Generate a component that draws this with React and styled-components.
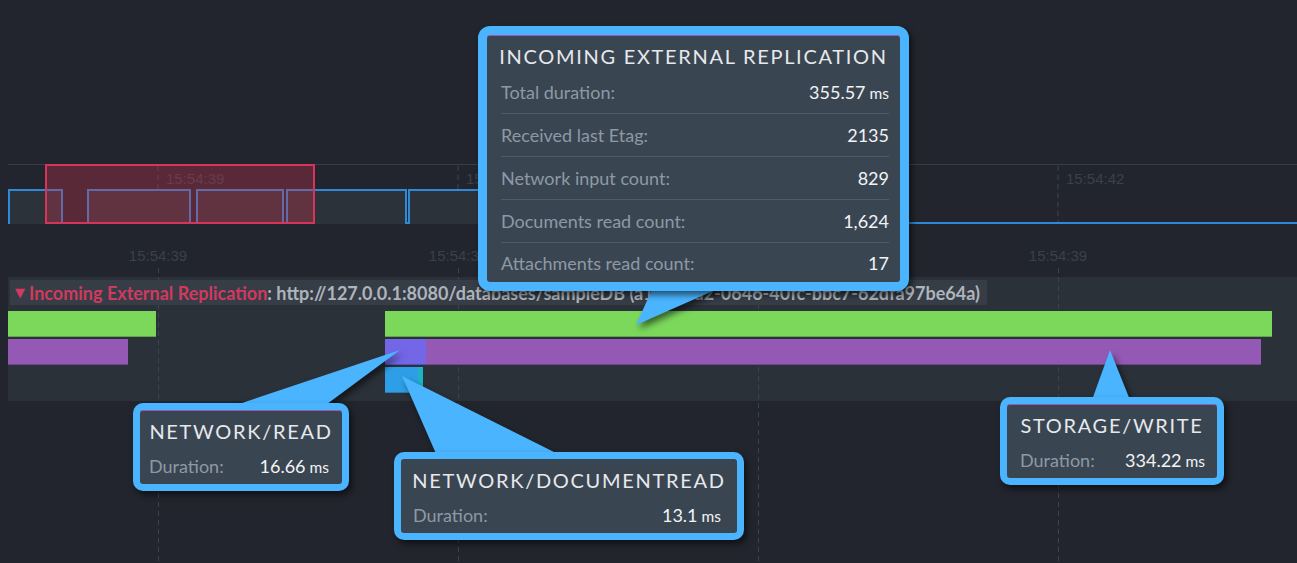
import React from "react";
import styled, { createGlobalStyle } from "styled-components";

const GlobalStyle = createGlobalStyle`
  html, body { margin: 0; padding: 0; background: #22252d; }
  body { font-family: Lato, "Open Sans", "DejaVu Sans", sans-serif; overflow: hidden; }
`;

const Page = styled.div`
  position: relative;
  width: 1297px;
  height: 563px;
  background: #22252d;
  padding-top: 164px;
  box-sizing: border-box;
  display: flex;
  flex-direction: column;
  overflow: hidden;
`;

/* ---------- overview strip ---------- */
const Overview = styled.div`
  position: relative;
  margin-left: 8px;
  height: 60px;
  border-top: 1px solid #383e47;
  box-sizing: border-box;
  flex: none;
`;

const OverviewChart = styled.svg`
  display: block;
  width: 1289px;
  height: 59px;
`;

const Brush = styled.div`
  position: absolute;
  top: -1px;
  left: ${(p) => p.$x}px;
  width: ${(p) => p.$w}px;
  height: 60px;
  box-sizing: border-box;
  border: 2px solid #d6345b;
  background: rgba(200, 50, 80, 0.34);
`;

/* ---------- body: axis + tracks + grid ---------- */
const Body = styled.div`
  position: relative;
  flex: 1;
  display: flex;
  flex-direction: column;
`;

const GridLayer = styled.div`
  position: absolute;
  top: 44px;
  bottom: 0;
  left: 8px;
  right: 0;
  display: flex;
  z-index: 1;
  pointer-events: none;
`;

const GridCol = styled.div`
  flex: none;
  width: 300px;
  background-image: repeating-linear-gradient(
    to bottom,
    #3c434d 0 5px,
    transparent 5px 9px
  );
  background-size: 1px 100%;
  background-position: center top;
  background-repeat: no-repeat;
`;

const Axis = styled.div`
  height: 53px;
  display: flex;
  padding-left: 8px;
  align-items: center;
  padding-top: 11px;
  box-sizing: border-box;
  flex: none;
`;

const TickLabel = styled.div`
  width: 300px;
  flex: none;
  text-align: center;
  font-family: "Liberation Sans", Arial, sans-serif;
  font-size: 15px;
  color: #3a414b;
  line-height: 18px;
`;

const Tracks = styled.div`
  margin-left: 8px;
  height: 124px;
  background: #2b3139;
  padding: 3px 0 0 0;
  box-sizing: border-box;
  display: flex;
  flex-direction: column;
  flex: none;
`;

const TrackHeader = styled.div`
  position: relative;
  z-index: 2;
  align-self: flex-start;
  margin-left: 2px;
  height: 25px;
  display: flex;
  align-items: center;
  padding: 0 7px 0 5px;
  background: #363d47;
  font-family: Lato, sans-serif;
  font-weight: 700;
  font-size: 18px;
  color: #aeb4bb;
  white-space: nowrap;
`;

const Caret = styled.span`
  color: #d43a60;
  font-family: "DejaVu Sans", sans-serif;
  font-size: 13px;
  margin-right: 4px;
`;

const TaskName = styled.span`
  color: #d03a5e;
`;

const Lane = styled.div`
  position: relative;
  z-index: 2;
  height: 26px;
  margin-top: ${(p) => (p.$first ? 6 : 2)}px;
  flex: none;
`;

const Bar = styled.div`
  position: absolute;
  top: 0;
  bottom: 0;
  background: ${(p) => p.$color};
  box-shadow: inset 0 -1px 0 rgba(0, 0, 0, 0.22);
`;

/* ---------- callouts ---------- */
const PointerLayer = styled.svg`
  position: absolute;
  left: 0;
  top: 0;
  width: 1297px;
  height: 563px;
  z-index: 9;
  pointer-events: none;
  filter: drop-shadow(3px 4px 3px rgba(0, 0, 0, 0.55));
`;

const Callout = styled.div`
  position: absolute;
  z-index: 10;
  left: ${(p) => p.$x}px;
  top: ${(p) => p.$y}px;
  width: ${(p) => p.$w}px;
  box-sizing: border-box;
  border: ${(p) => p.$border}px solid #4ab4fe;
  border-radius: ${(p) => p.$border + 3}px;
  background: #3a4552;
  box-shadow: 3px 4px 6px rgba(0, 0, 0, 0.55),
    inset 0 1px 0 ${(p) => (p.$accent ? "#9b59b6" : "transparent")};
  padding-top: 9px;
  padding-bottom: ${(p) => p.$pb || 0}px;
`;

const CalloutTitle = styled.div`
  text-align: center;
  font-family: Lato, sans-serif;
  font-size: 20px;
  line-height: 24px;
  letter-spacing: 1.7px;
  color: #e6e9ec;
  margin-bottom: ${(p) => p.$gap}px;
  white-space: nowrap;
`;

const StatRow = styled.div`
  display: flex;
  align-items: center;
  justify-content: space-between;
  height: ${(p) => p.$h || 42}px;
  margin: 0 ${(p) => p.$pr || 12}px 0 ${(p) => p.$pl || 12}px;
  border-bottom: ${(p) => (p.$sep ? "1px solid #505b68" : "none")};
  font-family: Lato, sans-serif;
  font-size: 18px;
`;

const StatLabel = styled.span`
  color: #8e99a5;
`;

const StatValue = styled.span`
  color: #f1f3f5;
`;

const Unit = styled.span`
  font-size: 15.5px;
  margin-left: 4px;
`;

/* ---------- data ---------- */
const blueLine =
  "M1,59 L1,25 L54,25 L54,58 L80,58 L80,25 L182,25 L182,58 L189,58 L189,25 L275,25 L275,58 L279,58 L279,25 L398,25 L398,58 L401,58 L401,25 L700,25 L700,58 L1289,58";

const overviewTicks = [
  { x: 150, label: "15:54:39" },
  { x: 450, label: "15:54:40" },
  { x: 750, label: "15:54:41" },
  { x: 1050, label: "15:54:42" },
];

const axisLabels = ["15:54:39", "15:54:39", "15:54:39", "15:54:39"];

const lanes = [
  [
    { left: 0, width: 148, color: "#7bd85b" },
    { left: 377, width: 887, color: "#7bd85b" },
  ],
  [
    { left: 0, width: 120, color: "#9459b4" },
    { left: 377, width: 876, color: "#9459b4" },
    { left: 377, width: 41, color: "#7367e8" },
  ],
  [
    { left: 377, width: 33, color: "#2e9fe6" },
    { left: 410, width: 5, color: "#1fb3c6" },
  ],
];

const mainStats = [
  { label: "Total duration:", value: "355.57", unit: "ms" },
  { label: "Received last Etag:", value: "2135" },
  { label: "Network input count:", value: "829" },
  { label: "Documents read count:", value: "1,624" },
  { label: "Attachments read count:", value: "17" },
];

const smallCallouts = [
  { title: "NETWORK/READ", value: "16.66", x: 133, y: 403, w: 216, pl: 9, pr: 13, accent: true },
  { title: "NETWORK/DOCUMENTREAD", value: "13.1", x: 394, y: 452, w: 350, pl: 12, pr: 16, accent: false },
  { title: "STORAGE/WRITE", value: "334.22", x: 1000, y: 397, w: 224, pl: 13, pr: 12, accent: true },
];

const pointers = [
  "655,283 731,283 636,325",
  "230,407 323,407 400,350",
  "437,456 562,456 402,376",
  "1092,400 1130,400 1110,350",
];

export default function App() {
  return (
    <>
      <GlobalStyle />
      <Page>
        <Overview>
          <OverviewChart viewBox="0 0 1289 59">
            {overviewTicks.map((t) => (
              <g key={t.x}>
                <line
                  x1={t.x}
                  x2={t.x}
                  y1={1}
                  y2={58}
                  stroke="#3a4049"
                  strokeWidth="1.2"
                  strokeDasharray="5 4"
                />
                <text
                  x={t.x + 8}
                  y={19}
                  fill="#3a414b"
                  fontSize="15"
                  fontFamily="Liberation Sans, Arial, sans-serif"
                >
                  {t.label}
                </text>
              </g>
            ))}
            <path d={blueLine + " L1289,59 L1,59 Z"} fill="#2c3239" stroke="none" />
            <path d={blueLine} fill="none" stroke="#2e89d6" strokeWidth="2" />
          </OverviewChart>
          <Brush $x={37} $w={270} />
        </Overview>

        <Body>
          <GridLayer>
            {axisLabels.map((_, i) => (
              <GridCol key={i} />
            ))}
          </GridLayer>
          <Axis>
            {axisLabels.map((l, i) => (
              <TickLabel key={i}>{l}</TickLabel>
            ))}
          </Axis>
          <Tracks>
            <TrackHeader>
              <Caret>▼</Caret>
              <TaskName>Incoming External Replication</TaskName>
              <span>: http://127.0.0.1:8080/databases/sampleDB (a1c3b7d2-0646-40fc-bbc7-62dfa97be64a)</span>
            </TrackHeader>
            {lanes.map((bars, i) => (
              <Lane key={i} $first={i === 0}>
                {bars.map((b, j) => (
                  <Bar
                    key={j}
                    $color={b.color}
                    style={{ left: b.left, width: b.width }}
                  />
                ))}
              </Lane>
            ))}
          </Tracks>
        </Body>

        <PointerLayer viewBox="0 0 1297 563">
          {pointers.map((p) => (
            <polygon key={p} points={p} fill="#4ab4fe" />
          ))}
        </PointerLayer>

        <Callout $x={478} $y={26} $w={431} $border={9} $accent>
          <CalloutTitle $gap={3}>INCOMING EXTERNAL REPLICATION</CalloutTitle>
          {mainStats.map((s, i) => (
            <StatRow
              key={s.label}
              $sep={i < mainStats.length - 1}
              $h={i < mainStats.length - 1 ? 42 : 39}
              $pl={14}
              $pr={11}
            >
              <StatLabel>{s.label}</StatLabel>
              <StatValue>
                {s.value}
                {s.unit && <Unit>{s.unit}</Unit>}
              </StatValue>
            </StatRow>
          ))}
        </Callout>

        {smallCallouts.map((c) => (
          <Callout
            key={c.title}
            $x={c.x}
            $y={c.y}
            $w={c.w}
            $border={7}
            $accent={c.accent}
            $pb={6}
          >
            <CalloutTitle $gap={11}>{c.title}</CalloutTitle>
            <StatRow $h={24} $pl={c.pl} $pr={c.pr}>
              <StatLabel>Duration:</StatLabel>
              <StatValue>
                {c.value}
                <Unit>ms</Unit>
              </StatValue>
            </StatRow>
          </Callout>
        ))}
      </Page>
    </>
  );
}
